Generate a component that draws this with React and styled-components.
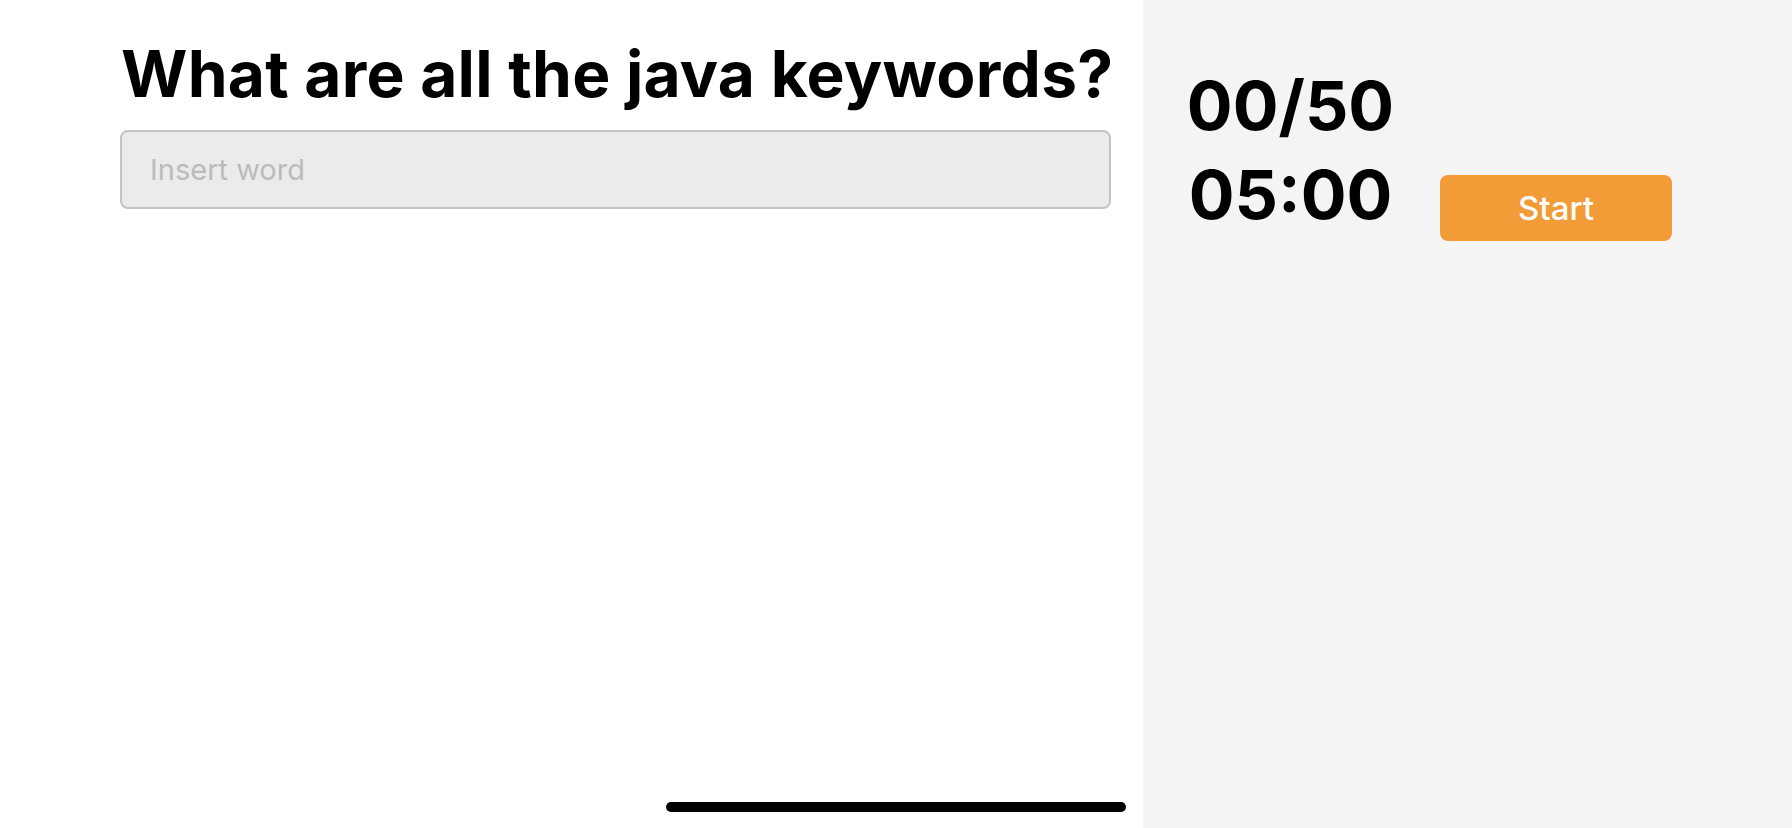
import React from "react";
import styled, { createGlobalStyle } from "styled-components";

const GlobalStyle = createGlobalStyle`
  html, body {
    margin: 0;
    padding: 0;
    height: 100%;
    background: #ffffff;
  }
  body {
    font-family: Inter, "Noto Sans", "Liberation Sans", sans-serif;
    color: #000;
  }
  #root {
    height: 100%;
  }
`;

const Screen = styled.div`
  display: grid;
  grid-template-columns: 1143px 1fr;
  height: 100vh;
  overflow: hidden;
`;

const QuizPane = styled.main`
  background: #ffffff;
  padding: 35px 32px 0 120px;
  display: flex;
  flex-direction: column;
`;

const Title = styled.h1`
  margin: 0 0 18px 1px;
  font-size: 64px;
  font-weight: 700;
  line-height: 1.21;
  letter-spacing: 0.25px;
  white-space: nowrap;
`;

const WordInput = styled.input`
  box-sizing: border-box;
  width: 100%;
  height: 79px;
  margin: 0;
  padding: 0 28px;
  border: 2px solid #c3c3c3;
  border-radius: 8px;
  background: #ebebeb;
  font-family: Inter, "Noto Sans", sans-serif;
  font-size: 29px;
  color: #000;
  outline: none;

  &::placeholder {
    color: #bbbbbb;
  }
`;

const SidePane = styled.aside`
  background: #f4f4f4;
  padding: 61px 0 0 40px;
  display: flex;
  align-items: flex-start;
  gap: 42px;
`;

const Stats = styled.div`
  width: 215px;
  display: flex;
  flex-direction: column;
  align-items: center;
`;

const StatLine = styled.div`
  font-size: 68px;
  font-weight: 700;
  line-height: 89px;
  white-space: nowrap;
`;

const StartButton = styled.button`
  margin-top: 114px;
  width: 232px;
  height: 66px;
  border: none;
  border-radius: 8px;
  background: #f39b36;
  color: #ffffff;
  font-family: Inter, "Noto Sans", sans-serif;
  font-size: 33px;
  font-weight: 500;
  cursor: pointer;
`;

const HomeIndicator = styled.div`
  position: fixed;
  left: 50%;
  bottom: 16px;
  transform: translateX(-50%);
  width: 460px;
  height: 10px;
  border-radius: 5px;
  background: #000;
`;

export default function App() {
  return (
    <>
      <GlobalStyle />
      <Screen>
        <QuizPane>
          <Title>What are all the java keywords?</Title>
          <WordInput placeholder="Insert word" />
        </QuizPane>
        <SidePane>
          <Stats>
            <StatLine>00/50</StatLine>
            <StatLine>05:00</StatLine>
          </Stats>
          <StartButton>Start</StartButton>
        </SidePane>
      </Screen>
      <HomeIndicator />
    </>
  );
}
